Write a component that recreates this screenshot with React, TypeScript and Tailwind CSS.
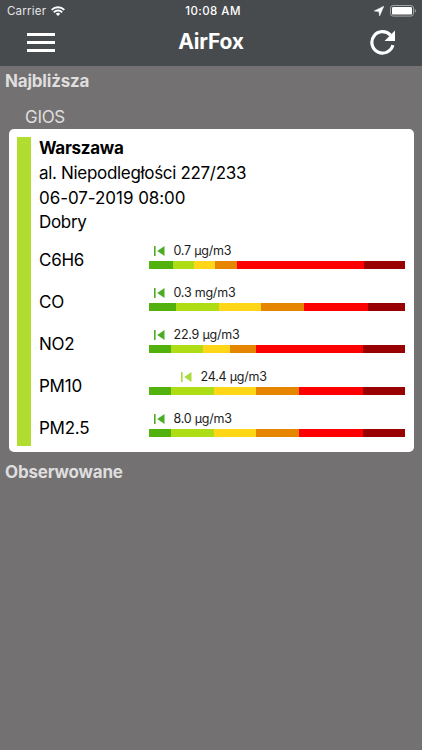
type Reading = {
  name: string;
  value: string;
  offset: number;
  color: string;
  segments: number[];
};

const levelColors = ["#52b10c", "#aedd16", "#ffd618", "#e58500", "#ff0000", "#990000"];

const readings: Reading[] = [
  { name: "C6H6", value: "0.7 µg/m3", offset: 5, color: "#4dab26", segments: [23.5, 21.5, 21, 21.5, 127.5, 41] },
  { name: "CO", value: "0.3 mg/m3", offset: 5, color: "#4dab26", segments: [26.5, 43, 42.5, 42.5, 64.5, 37] },
  { name: "NO2", value: "22.9 µg/m3", offset: 5, color: "#4dab26", segments: [21.5, 32.5, 26.5, 26.5, 107, 42] },
  { name: "PM10", value: "24.4 µg/m3", offset: 32, color: "#aadb3c", segments: [22, 42.5, 42.5, 43, 64, 42] },
  { name: "PM2.5", value: "8.0 µg/m3", offset: 5, color: "#4dab26", segments: [22, 42.5, 42.5, 43, 64, 42] }
];

function StatusBar() {
  return (
    <div className="flex h-[22px] items-center justify-between pl-[7px] pr-[5px] text-[11.5px] leading-none">
      <div className="flex flex-1 items-center gap-[5px]">
        <span className="pt-px tracking-[0.22px] text-[#e4e5e6]">Carrier</span>
        <svg width="14" height="10" viewBox="0 0 14 10" fill="none" stroke="#fff" strokeWidth="1.9">
          <path d="M0.7 3.8a8.9 8.9 0 0 1 12.6 0" />
          <path d="M2.8 6.3a5.9 5.9 0 0 1 8.4 0" />
          <path d="M7 10L4.8 7.8a3.1 3.1 0 0 1 4.4 0z" fill="#fff" stroke="none" />
        </svg>
      </div>
      <span className="pl-[2px] pt-px font-medium tracking-[0.45px] text-white">10:08 AM</span>
      <div className="flex flex-1 items-center justify-end gap-[6px]">
        <svg width="10" height="10" viewBox="0 0 10 10" fill="#fff">
          <path d="M9.8 0.2L5.6 9.9L4.9 5.6L0.2 5z" stroke="#fff" strokeWidth="0.5" />
        </svg>
        <svg width="27" height="12" viewBox="0 0 27 12">
          <rect x="0.5" y="0.5" width="23" height="10.6" rx="2.6" fill="none" stroke="#a2a4a6" />
          <rect x="2" y="2" width="20" height="7.6" rx="1.2" fill="#fff" />
          <path d="M24.8 4v3.8c1.6-.6 1.6-3.2 0-3.8z" fill="#a2a4a6" />
        </svg>
      </div>
    </div>
  );
}

function Header() {
  return (
    <header className="h-[66px] bg-[#484b4e] text-white">
      <StatusBar />
      <div className="flex h-[40px] items-center pl-[27px] pr-[27px]">
        <div className="flex-1">
          <button type="button" className="flex w-[28px] flex-col gap-[5px]">
            <span className="h-[3px] bg-white" />
            <span className="h-[3px] bg-white" />
            <span className="h-[3px] bg-white" />
          </button>
        </div>
        <h1 className="pb-px text-[21px] font-bold leading-none tracking-[-0.2px]">AirFox</h1>
        <div className="flex flex-1 justify-end">
          <button type="button">
            <svg width="25" height="25" viewBox="0 0 25 25">
              <path d="M20.5 5.2A10.7 10.7 0 1 0 22.9 15.2" fill="none" stroke="#fff" strokeWidth="3.2" />
              <path d="M25 0.5V11H14.5z" fill="#fff" />
            </svg>
          </button>
        </div>
      </div>
    </header>
  );
}

function ReadingRow({ reading }: { reading: Reading }) {
  return (
    <div className="flex h-[42px]">
      <span className="w-[110px] pt-[9px] text-[17px] leading-[22px] tracking-[-0.25px]">{reading.name}</span>
      <div className="w-[256px]">
        <div className="flex h-[20.5px] items-center" style={{ paddingLeft: reading.offset }}>
          <svg width="11" height="10" viewBox="0 0 11 10" fill={reading.color}>
            <path d="M0 0h1.6v10H0zM10.5 0v10L3.2 5z" />
          </svg>
          <span className="ml-[8.5px] pt-[2px] text-[12.5px] leading-none tracking-[-0.22px] text-[#1c1c1c]">{reading.value}</span>
        </div>
        <div className="flex h-[8px]">
          {reading.segments.map((width, i) => (
            <div key={i} style={{ width, backgroundColor: levelColors[i] }} />
          ))}
        </div>
      </div>
    </div>
  );
}

export default function App() {
  return (
    <div className="flex h-[750px] w-[422px] flex-col bg-[#737172] font-[Inter,sans-serif]">
      <Header />
      <h2 className="pl-[5px] pt-[4px] text-[17px] font-bold leading-[22px] tracking-[-0.2px] text-[#dfdede]">Najbliższa</h2>
      <p className="pl-[25px] pt-[14px] text-[17px] leading-[22px] tracking-[-0.3px] text-[#dfdede]">GIOS</p>
      <section className="ml-[8.5px] mt-[0.5px] flex h-[323.5px] w-[405px] rounded-[5px] bg-white p-[8.5px] pb-[6px] text-black">
        <div className="w-[14px] shrink-0 bg-[#b0dd30]" />
        <div className="ml-[8px]">
          <div className="-mt-px text-[17px] leading-[24.8px] tracking-[-0.3px]">
            <p className="font-bold">Warszawa</p>
            <p className="tracking-[-0.32px]">al. Niepodległości 227/233</p>
            <p className="tracking-[-0.05px]">06-07-2019 08:00</p>
            <p>Dobry</p>
          </div>
          <div className="mt-[5.3px]">
            {readings.map((reading) => (
              <ReadingRow key={reading.name} reading={reading} />
            ))}
          </div>
        </div>
      </section>
      <h2 className="pl-[5px] pt-[9px] text-[17px] font-bold leading-[22px] tracking-[-0.2px] text-[#dfdede]">Obserwowane</h2>
    </div>
  );
}
